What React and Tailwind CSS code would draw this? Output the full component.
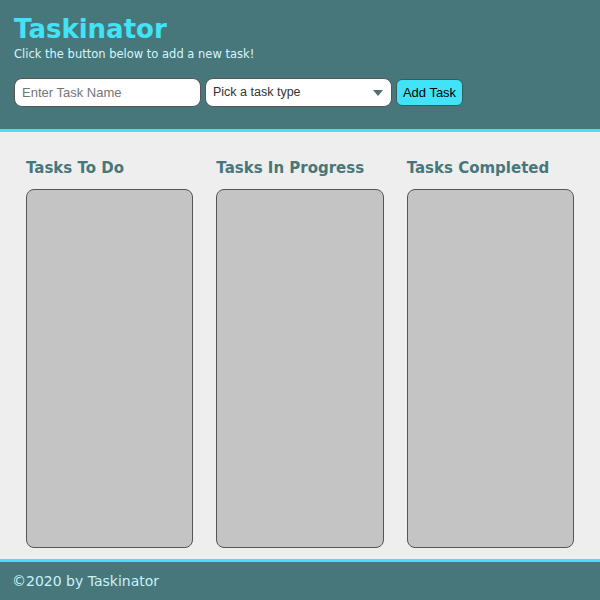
export default function App() {
  const columns = ['Tasks To Do', 'Tasks In Progress', 'Tasks Completed']

  return (
    <div className="flex h-[600px] flex-col bg-[#eeeeee] font-['DejaVu_Sans',Verdana,sans-serif]">
      <header className="border-b-[3px] border-[#42e3f7] bg-[#48777b] px-[14px] pb-[22px] pt-[12px]">
        <h1 className="text-[26px] font-bold leading-[34px] text-[#42e3f7]">Taskinator</h1>
        <p className="text-[11.5px] leading-[16px] text-[#d4f6fb]">Click the button below to add a new task!</p>
        <form className="mt-[16px] flex items-center gap-[4px] font-['Liberation_Sans',Arial,sans-serif] text-[13px]">
          <input
            type="text"
            placeholder="Enter Task Name"
            className="h-[29px] w-[187px] rounded-[8px] border border-[#555] bg-white px-[7px] text-[#333] placeholder:text-[#757575] outline-none"
          />
          <div className="relative h-[29px] w-[187px]">
            <div className="flex h-full items-center rounded-[8px] border border-[#555] bg-white px-[7px] text-[12.5px] text-[#333]">
              Pick a task type
            </div>
            <svg className="absolute right-[9px] top-[12px]" width="10" height="6" viewBox="0 0 10 6">
              <path d="M0 0 L10 0 L5 6 Z" fill="#4f6f76" />
            </svg>
          </div>
          <button
            type="button"
            className="h-[27px] w-[67px] rounded-[6px] border border-[#3a5a5e] bg-[#42e3f7] text-black"
          >
            Add Task
          </button>
        </form>
      </header>

      <main className="grid flex-1 grid-cols-3 gap-x-[23px] px-[26px] pb-[11px] pt-[26px]">
        {columns.map((name) => (
          <section key={name} className="flex flex-col">
            <h2 className="mb-[11px] text-[15px] font-bold leading-[20px] text-[#48777b]">{name}</h2>
            <div className="flex-1 rounded-[8px] border border-[#555] bg-[#c4c4c4]"></div>
          </section>
        ))}
      </main>

      <footer className="flex h-[41px] items-center border-t-[3px] border-[#42e3f7] bg-[#48777b] px-[12px]">
        <span className="text-[14px] text-[#c8f2f8]">©2020 by Taskinator</span>
      </footer>
    </div>
  )
}
